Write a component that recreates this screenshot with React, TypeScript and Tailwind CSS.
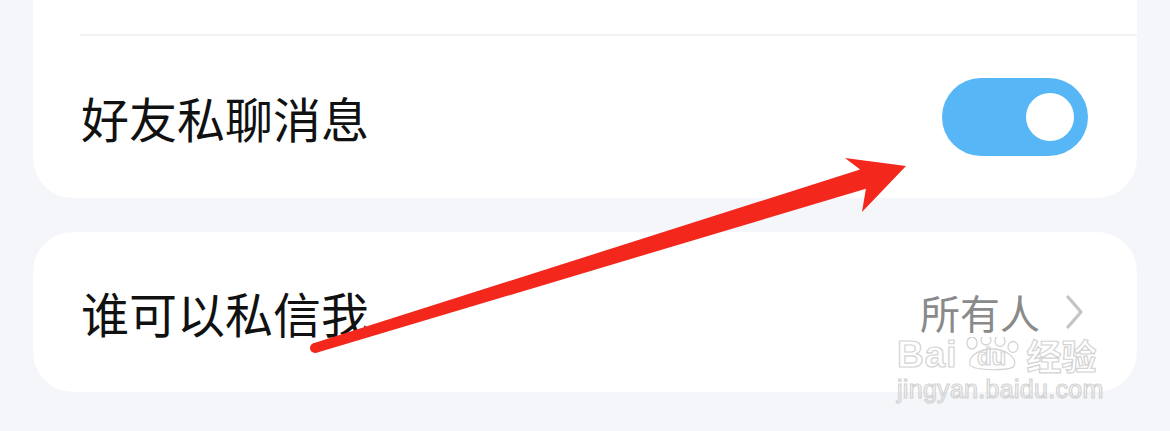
import { useState } from 'react';

function Toggle({ on, onChange }: { on: boolean; onChange: () => void }) {
  return (
    <button
      onClick={onChange}
      className={`flex h-[78px] w-[146px] shrink-0 items-center rounded-full px-[14px] ${
        on ? 'justify-end bg-[#57b6f6]' : 'justify-start bg-[#dcdde2]'
      }`}
    >
      <span className="block h-[48px] w-[48px] rounded-full bg-white" />
    </button>
  );
}

function Watermark() {
  return (
    <div className="pointer-events-none absolute left-[897px] top-[337px] flex flex-col font-['Liberation_Sans',sans-serif] text-transparent [-webkit-text-stroke:1.2px_#cfcfcf] opacity-90">
      <div className="flex h-[34px] items-center">
        <span className="text-[37px] font-bold leading-none tracking-[1px]">Bai</span>
        <span className="relative ml-[2px] flex h-[34px] w-[64px] items-end justify-center">
          <svg className="absolute inset-0" width="64" height="34" viewBox="0 0 64 34" fill="none" stroke="#d0d0d0" strokeWidth="1.3">
            <ellipse cx="12" cy="6" rx="5" ry="6" />
            <ellipse cx="26" cy="3" rx="5" ry="5" />
            <ellipse cx="40" cy="4" rx="5" ry="5.5" />
            <ellipse cx="53" cy="10" rx="5" ry="5.5" />
            <path d="M10 28 C 8 17, 22 12, 32 12 C 43 12, 58 19, 54 29 C 52 34, 14 34, 10 28 Z" />
          </svg>
          <span className="relative mb-[2px] text-[24px] font-bold leading-none">du</span>
        </span>
        <span className="ml-[3px] font-['Noto_Sans_CJK_SC',sans-serif] text-[35px] font-bold leading-none">经验</span>
      </div>
      <span className="mt-[6px] text-[25px] leading-none tracking-[0.3px]">jingyan.baidu.com</span>
    </div>
  );
}

export default function App() {
  const [on, setOn] = useState(true);

  return (
    <div className="relative h-[431px] w-[1170px] overflow-hidden bg-[#f5f6fa] font-['Noto_Sans_CJK_SC','Noto_Sans',sans-serif]">
      <div className="flex flex-col gap-[34px] px-[33px]">
        {/* Card 1: previous row cut off at top */}
        <div className="flex flex-col rounded-b-[40px] bg-white">
          <div className="h-[34px]" />
          <div className="ml-[47px] h-[2px] bg-[#f1f2f5]" />
          <div className="flex h-[162px] items-center justify-between pl-[48px] pr-[49px]">
            <span className="text-[48px] leading-none text-[#111]">好友私聊消息</span>
            <Toggle on={on} onChange={() => setOn(!on)} />
          </div>
        </div>

        {/* Card 2 */}
        <div className="flex h-[160px] items-center justify-between rounded-[40px] bg-white pl-[48px] pr-[54px]">
          <span className="text-[48px] leading-none text-[#111]">谁可以私信我</span>
          <div className="flex items-center gap-[26px]">
            <span className="text-[40px] leading-none text-[#8a8a8a]">所有人</span>
            <svg width="17" height="34" viewBox="0 0 17 34" fill="none" stroke="#c4c4c4" strokeWidth="3.2" strokeLinecap="round" strokeLinejoin="round">
              <polyline points="2,2 15,17 2,32" />
            </svg>
          </div>
        </div>
      </div>

      {/* annotation arrow */}
      <svg className="pointer-events-none absolute left-0 top-0" width="1170" height="431" viewBox="0 0 1170 431">
        <polygon
          fill="#f4271c"
          points="313.5,343.2 860.1,169.6 845,158 906,166 862,212 865.9,188.8 316.5,352.8"
        />
        <circle cx="315" cy="348" r="5" fill="#f4271c" />
      </svg>

      <Watermark />
    </div>
  );
}
